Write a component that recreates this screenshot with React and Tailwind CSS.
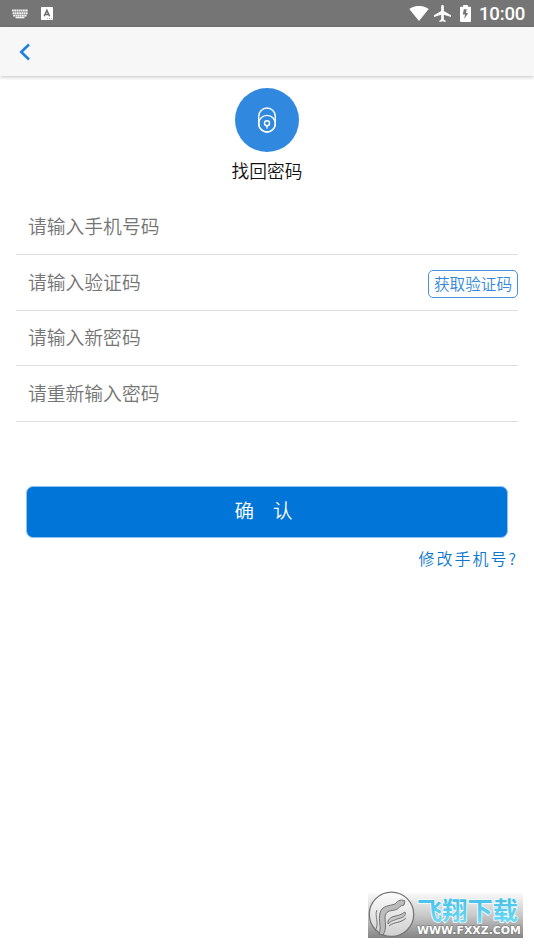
const fields = [
  { label: "请输入手机号码", height: "h-[56px]" },
  { label: "请输入验证码", height: "h-[56px]", action: "获取验证码" },
  { label: "请输入新密码", height: "h-[55px]" },
  { label: "请重新输入密码", height: "h-[56px]" },
];

function KeyboardIcon() {
  return (
    <svg width="16" height="10" viewBox="0 0 16 10" fill="none" stroke="#f4f4f4">
      <path d="M0 1.500H16M0.600 4.200H15.600M1.200 6.600H15" strokeWidth="1.900" strokeDasharray="1.800 .4" />
      <path d="M3.500 8.500H12.500" strokeWidth="1.600" />
    </svg>
  );
}

function StatusBar() {
  return (
    <div className="flex h-[27px] items-center bg-[#757575] pl-3 pr-[9px] text-white">
      <KeyboardIcon />
      <svg className="ml-[13px]" width="12" height="13" viewBox="0 0 12 13">
        <rect width="12" height="13" rx=".7" fill="#fff" />
        <path d="M3.2 9.2 5.9 3.4 8.6 9.2M4.2 7.4H7.7" fill="none" stroke="#6b6b6b" strokeWidth="1.5" />
        <path d="M6 11.4h1M8 11.4h1M10 11.4h1" stroke="#999" strokeWidth=".8" />
      </svg>
      <svg className="ml-auto" width="20" height="16" viewBox="0 0 20 16" fill="#fff">
        <path d="M0.3 3.1C6 -1.1 14 -1.1 19.7 3.1L10 15Z" />
      </svg>
      <svg className="ml-[5px] -mt-px" width="17" height="17" viewBox="2 2 19 20" fill="#fff" preserveAspectRatio="none">
        <path d="M21 16v-2l-8-5V3.5c0-.83-.67-1.5-1.5-1.5S10 2.67 10 3.5V9l-8 5v2l8-2.500V19l-2 1.500V22l3.500-1 3.500 1v-1.500L13 19v-5.500l8 2.500z" />
      </svg>
      <svg className="ml-[9px] -mt-px" width="11" height="17" viewBox="0 0 11 17">
        <path d="M3.2 0H7.8V1.8H10.200Q11 1.800 11 2.600V16Q11 17 10 17H1Q0 17 0 16V2.600Q0 1.800.8 1.800H3.200Z" fill="#fff" />
        <path d="M6.700 4.300H3.800L2.800 9.600H5L4.300 14 8.200 8H6Z" fill="#757575" />
      </svg>
      <span className="ml-2 w-[46px] pt-px whitespace-nowrap font-[Roboto,sans-serif] text-[18.6px] leading-[26px] font-medium tracking-[-0.2px]">
        10:00
      </span>
    </div>
  );
}

function Watermark() {
  return (
    <div className="absolute left-[368px] top-[893px] h-[45px] w-[155px] bg-linear-to-b from-[#fafafa] via-[#c8c8c8] to-[#858585]">
      <svg className="overflow-visible" width="155" height="45" viewBox="0 0 155 45">
        <defs>
          <linearGradient id="disc" x1="0" y1="0" x2="0" y2="1">
            <stop offset="0" stopColor="#fcfcfc" />
            <stop offset="1" stopColor="#d0d0d0" />
          </linearGradient>
          <linearGradient id="name" x1="0" y1="0" x2="0" y2="1">
            <stop offset="0" stopColor="#45bde8" />
            <stop offset="1" stopColor="#70dbf5" />
          </linearGradient>
        </defs>
        <circle cx="23.500" cy="21.300" r="22.200" fill="url(#disc)" stroke="#777" strokeWidth="1.300" />
        <path d="M11 41C14 34 10 28 12 20 14 12 22 13 27 11 30 7 34 6 37 8L36 12C32 12 31 16 27 17 21 18 18 18 17 24 17 31 19 35 15 42Z" fill="#bcbcbc" stroke="#666" strokeWidth=".9" />
        <path d="M9 17C6 23 12 30 7 38" fill="none" stroke="#777" strokeWidth="1" />
        <path d="M20 28C24 21 29 25 37 19 39 23 34 25 29 26 25 28 24 27 20 31ZM21 33C27 28 32 31 38 25" fill="#c6c6c6" stroke="#666" strokeWidth=".9" />
        <text x="49" y="26.500" textLength="101" lengthAdjust="spacingAndGlyphs" fontFamily="Liberation Sans, Noto Sans CJK SC, sans-serif" fontSize="25" fontWeight="700" fill="url(#name)" stroke="#f0fbff" strokeWidth="1.600" paintOrder="stroke">
          飞翔下载
        </text>
        <text x="49" y="41" textLength="104" lengthAdjust="spacingAndGlyphs" fontFamily="DejaVu Sans, sans-serif" fontSize="10.500" fontWeight="700" fill="#fff" stroke="#777" strokeWidth="1.200" paintOrder="stroke">
          WWW.FXXZ.COM
        </text>
      </svg>
    </div>
  );
}

export default function App() {
  return (
    <div className="relative h-[950px] w-[534px] overflow-hidden bg-white font-['Noto_Sans_CJK_SC',sans-serif]">
      <StatusBar />
      <header className="flex h-[49px] items-center bg-[#f7f7f7] pl-[19px] shadow-[0_1px_4px_rgba(0,0,0,0.24)]">
        <svg width="12" height="18" viewBox="0 0 12 18" fill="none" stroke="#1b7ee6" strokeWidth="2.500">
          <path d="M10 1.500 2.200 9 10 16.500" />
        </svg>
      </header>

      <main>
        <section className="flex flex-col items-center pt-3">
          <div className="flex size-16 items-center justify-center rounded-full bg-[#3189df]">
            <svg width="20" height="28" viewBox="0 0 20 28" fill="none" stroke="#fff" strokeWidth="1.400">
              <rect x="1.700" y="2" width="16.600" height="24" rx="8.300" />
              <circle cx="10" cy="17.700" r="8.300" />
              <circle cx="10" cy="17.300" r="2.500" />
              <path d="M10 20v2.600" />
            </svg>
          </div>
          <h1 className="mt-[5px] text-[17.7px] leading-[26px] font-[350] text-[#111]">找回密码</h1>
        </section>

        <section className="mx-4 mt-4">
          {fields.map(({ label, height, action }) => (
            <div key={label} className={`flex items-center border-b border-[#dedede] pl-3 ${height}`}>
              <span className="pb-[2px] text-[18.8px] leading-7 font-[350] text-[#757575]">{label}</span>
              {action && (
                <button className="ml-auto mt-[3px] h-7 w-[90px] rounded-[5px] border border-[#4893dc] pb-[2px] text-[15.6px] leading-[23px] font-[350] whitespace-nowrap text-[#3388da]">
                  {action}
                </button>
              )}
            </div>
          ))}
        </section>

        <section className="pt-[64px]">
          <button className="ml-[26px] block h-[52px] w-[482px] rounded-[7px] border border-[#8cc3f0] bg-[#0175d8] pb-1 text-[19.500px] font-[350] whitespace-pre text-white">
            <span className="mr-[19px]">确</span>
            <span className="mr-[7px]">认</span>
          </button>
          <a className="mt-2 mr-4 block text-right text-[16px] leading-6 font-[350] tracking-[2px] text-[#0e78cf]">
            修改手机号?
          </a>
        </section>
      </main>
      <Watermark />
    </div>
  );
}
